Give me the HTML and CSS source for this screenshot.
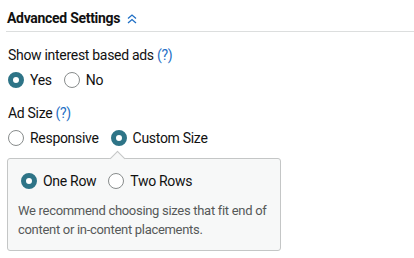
FILE: index.html
```html
<!DOCTYPE html>
<html lang="en">
<head>
    <meta charset="UTF-8">
    <meta name="viewport" content="width=device-width, initial-scale=1.0">
    <title>Advanced Settings</title>
    <link rel="stylesheet" href="styles.css">
</head>
<body>

    <div class="header">
        <span class="title">Advanced Settings</span>
        <svg class="chevron" width="10" height="10" viewBox="0 0 10 10">
            <path d="M1 4.5 L5 1 L9 4.5 M1 9 L5 5.5 L9 9" fill="none" stroke="#1f6fc5" stroke-width="1.3"/>
        </svg>
    </div>

    <div class="field">
        <div class="label">Show interest based ads <a href="#" class="help">(?)</a></div>
        <div class="options">
            <label class="radio"><span class="dot checked"></span>Yes</label>
            <label class="radio"><span class="dot"></span>No</label>
        </div>
    </div>

    <div class="field">
        <div class="label">Ad Size <a href="#" class="help">(?)</a></div>
        <div class="options">
            <label class="radio"><span class="dot"></span>Responsive</label>
            <label class="radio"><span class="dot checked"></span>Custom Size</label>
        </div>
    </div>

    <div class="popover">
        <div class="options">
            <label class="radio"><span class="dot checked"></span>One Row</label>
            <label class="radio"><span class="dot"></span>Two Rows</label>
        </div>
        <p class="note">We recommend choosing sizes that fit end of content or in-content placements.</p>
    </div>

</body>
</html>
```

FILE: styles.css
```css
body {
    margin: 0;
    padding: 0 0 0 6px;
    font-family: Roboto, "Noto Sans", sans-serif;
    font-size: 14px;
    letter-spacing: -0.3px;
    color: #111;
    background: #fff;
}
.header {
    display: flex;
    align-items: center;
    gap: 7px;
    height: 31px;
    border-bottom: 1px solid #dcdede;
    padding-left: 1px;
}
.title {
    font-weight: bold;
    font-size: 14px;
    padding-top: 5px;
}
.chevron {
    margin-top: 6px;
}
.field {
    padding-left: 2px;
}
.label {
    margin-top: 14px;
    line-height: 18px;
}
.field + .field .label {
    margin-top: 15px;
}
.help {
    color: #1f6fc5;
    text-decoration: none;
}
.options {
    display: flex;
    gap: 12px;
    margin-top: 7px;
    line-height: 18px;
}
.radio {
    display: flex;
    align-items: center;
    gap: 6px;
}
.dot {
    width: 14px;
    height: 14px;
    border: 1px solid #888c8c;
    border-radius: 50%;
    background: #fff;
    box-sizing: content-box;
}
.dot.checked {
    width: 6px;
    height: 6px;
    border: 5px solid #2e7487;
}
.popover {
    position: relative;
    width: 274px;
    margin-top: 11px;
    margin-left: 1px;
    background: #f7f8f8;
    border: 1px solid #c4c6c6;
    border-radius: 3px;
    padding: 13px 10px 11px 10px;
    box-sizing: border-box;
}
.popover::before {
    content: "";
    position: absolute;
    top: -6px;
    left: 104px;
    width: 10px;
    height: 10px;
    background: #f7f8f8;
    border-top: 1px solid #c4c6c6;
    border-left: 1px solid #c4c6c6;
    transform: rotate(45deg);
}
.popover .options {
    margin-top: 0;
    padding-left: 3px;
}
.note {
    margin: 11px 0 0 0;
    font-size: 13px;
    line-height: 19px;
    color: #565959;
}
```
